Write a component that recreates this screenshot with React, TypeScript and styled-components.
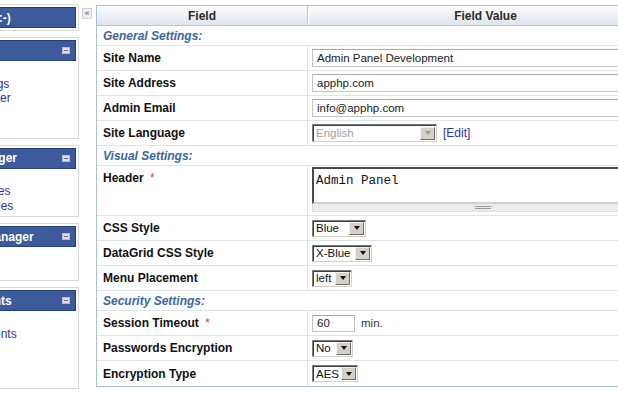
import styled, { createGlobalStyle } from "styled-components";

const menus = [
  { title: "General", items: ["Home", "Site Settings", "Site Scanner", "Backups", "Logout"] },
  { title: "Languages Manager", items: ["Add New", "Label Values", "All Messages"] },
  { title: "Subscriptions Manager", items: ["Plans", "Members"] },
  { title: "Users & Comments", items: ["Users", "All Comments", "Reviews", "Ratings", "Bans"] },
];

const App = () => {
  return (
    <>
      <GlobalStyle />
      <SPage>
        <SSidebar>
          <SPanel>
            <SBar>Welcome, admin :-)</SBar>
          </SPanel>
          {menus.map((menu) => (
            <SPanel key={menu.title}>
              <SBar>
                {menu.title}
                <SMinus />
              </SBar>
              <SMenuList>
                {menu.items.map((item) => (
                  <SMenuLink href="#" key={item}>
                    {item}
                  </SMenuLink>
                ))}
              </SMenuList>
            </SPanel>
          ))}
        </SSidebar>
        <SCollapse>«</SCollapse>
        <SMain>
          <STable>
            <SHeadRow>
              <SHeadCell>Field</SHeadCell>
              <SHeadCell>Field Value</SHeadCell>
            </SHeadRow>

            <SSection>General Settings:</SSection>
            <SRow>
              <SLabel>Site Name</SLabel>
              <SValue>
                <STextInput readOnly value="Admin Panel Development" />
              </SValue>
            </SRow>
            <SRow>
              <SLabel>Site Address</SLabel>
              <SValue>
                <STextInput readOnly value="apphp.com" />
              </SValue>
            </SRow>
            <SRow>
              <SLabel>Admin Email</SLabel>
              <SValue>
                <STextInput readOnly value="info@apphp.com" />
              </SValue>
            </SRow>
            <SRow>
              <SLabel>Site Language</SLabel>
              <SValue>
                <SSelect $w={125} $h={18} $disabled>
                  English
                  <SArrow $disabled />
                </SSelect>
                <SEditLink href="#">[Edit]</SEditLink>
              </SValue>
            </SRow>

            <SSection>Visual Settings:</SSection>
            <SRow $h={50}>
              <SLabel $top>
                Header <SReq>*</SReq>
              </SLabel>
              <SValue $top>
                <SAreaWrap>
                  <STextArea readOnly value="Admin Panel" />
                  <SGrip>
                    <SGripLines />
                  </SGrip>
                </SAreaWrap>
              </SValue>
            </SRow>
            <SRow>
              <SLabel>CSS Style</SLabel>
              <SValue>
                <SSelect $w={54}>
                  Blue
                  <SArrow />
                </SSelect>
              </SValue>
            </SRow>
            <SRow>
              <SLabel>DataGrid CSS Style</SLabel>
              <SValue>
                <SSelect $w={60}>
                  X-Blue
                  <SArrow />
                </SSelect>
              </SValue>
            </SRow>
            <SRow>
              <SLabel>Menu Placement</SLabel>
              <SValue>
                <SSelect $w={40}>
                  left
                  <SArrow />
                </SSelect>
              </SValue>
            </SRow>

            <SSection>Security Settings:</SSection>
            <SRow>
              <SLabel>
                Session Timeout <SReq>*</SReq>
              </SLabel>
              <SValue>
                <SSmallInput readOnly value="60" />
                <SUnit>min.</SUnit>
              </SValue>
            </SRow>
            <SRow>
              <SLabel>Passwords Encryption</SLabel>
              <SValue>
                <SSelect $w={41}>
                  No
                  <SArrow />
                </SSelect>
              </SValue>
            </SRow>
            <SRow>
              <SLabel>Encryption Type</SLabel>
              <SValue>
                <SSelect $w={46}>
                  AES
                  <SArrow />
                </SSelect>
              </SValue>
            </SRow>
          </STable>
        </SMain>
      </SPage>
    </>
  );
};

const GlobalStyle = createGlobalStyle`
  html, body {
    margin: 0;
    padding: 0;
    overflow: hidden;
    background: #fff;
  }
  body {
    font-family: "Liberation Sans", Arial, sans-serif;
    font-size: 12px;
    color: #222;
  }
  * {
    box-sizing: border-box;
  }
`;

const SPage = styled.div`
  display: flex;
  align-items: flex-start;
`;

const SSidebar = styled.div`
  flex-shrink: 0;
  width: 185px;
  margin-left: -106px;
  padding-top: 4px;
  display: flex;
  flex-direction: column;
  gap: 6px;
`;

const SPanel = styled.div`
  background: #fff;
  border: 1px solid #d9d9d9;
  padding: 2px;
`;

const SBar = styled.div`
  height: 21px;
  display: flex;
  align-items: center;
  justify-content: space-between;
  padding: 0 5px 0 3px;
  background: #3d5b9c;
  border: 1px solid #263f78;
  color: #fff;
  font-weight: bold;
  font-size: 12px;
  white-space: nowrap;
  overflow: hidden;
`;

const SMinus = styled.span`
  flex-shrink: 0;
  width: 8px;
  height: 7px;
  background: #dcdde6;
  border: 1px solid #b9bccb;
  display: flex;
  align-items: center;
  justify-content: center;
  &::after {
    content: "";
    width: 4px;
    height: 1px;
    background: #6a6f86;
  }
`;

const SMenuList = styled.div`
  padding: 1px 0 1px;
`;

const SMenuLink = styled.a`
  display: block;
  padding-left: 45px;
  line-height: 14.5px;
  font-size: 12px;
  color: #33339a;
  text-decoration: none;
  white-space: nowrap;
`;

const SCollapse = styled.div`
  flex-shrink: 0;
  width: 10px;
  height: 11px;
  margin: 8px 4px 0 3px;
  border: 1px solid #cfcfcf;
  background: #efefef;
  color: #555;
  font-size: 9px;
  line-height: 9px;
  text-align: center;
`;

const SMain = styled.div`
  flex-shrink: 0;
  padding-top: 5px;
`;

const STable = styled.div`
  width: 568px;
  border: 1px solid #a9bfd8;
  background: #fff;
`;

const SHeadRow = styled.div`
  display: grid;
  grid-template-columns: 211px 1fr;
  height: 20px;
  background: linear-gradient(#fbfcfd, #dfe5ec);
  border-bottom: 1px solid #b6c6d8;
`;

const SHeadCell = styled.div`
  display: flex;
  align-items: center;
  justify-content: center;
  font-weight: bold;
  color: #2a2a2a;
  &:first-child {
    border-right: 1px solid #b6c6d8;
    box-shadow: 1px 0 0 #fff;
  }
`;

const SSection = styled.div`
  height: 20px;
  display: flex;
  align-items: center;
  padding-left: 6px;
  border-bottom: 1px solid #dde4ec;
  color: #3a68a2;
  font-weight: bold;
  font-style: italic;
`;

const SRow = styled.div<{ $h?: number }>`
  display: grid;
  grid-template-columns: 211px 1fr;
  height: ${(p) => p.$h ?? 25}px;
  border-bottom: 1px solid #dde4ec;
  &:last-child {
    border-bottom: none;
  }
`;

const SLabel = styled.div<{ $top?: boolean }>`
  display: flex;
  align-items: ${(p) => (p.$top ? "flex-start" : "center")};
  padding: ${(p) => (p.$top ? "5px" : "0")} 0 0 6px;
  border-right: 1px solid #dde4ec;
  font-weight: bold;
  color: #111;
  white-space: pre;
`;

const SReq = styled.span`
  color: #e03a3a;
  font-weight: normal;
  margin-left: 3px;
`;

const SValue = styled.div<{ $top?: boolean }>`
  display: flex;
  align-items: ${(p) => (p.$top ? "flex-start" : "center")};
  padding: ${(p) => (p.$top ? "1px" : "0")} 0 0 4px;
  gap: 6px;
`;

const STextInput = styled.input`
  width: 340px;
  height: 18px;
  padding: 0 4px;
  border: 1px solid #c4c4c4;
  border-top-color: #a8a8a8;
  font-family: "Liberation Sans", Arial, sans-serif;
  font-size: 11.5px;
  color: #222;
  outline: none;
`;

const SSmallInput = styled(STextInput)`
  width: 43px;
  height: 17px;
`;

const SUnit = styled.span`
  font-size: 11.5px;
  color: #333;
`;

const SSelect = styled.div<{ $w: number; $h?: number; $disabled?: boolean }>`
  width: ${(p) => p.$w}px;
  height: ${(p) => p.$h ?? 17}px;
  display: inline-flex;
  align-items: center;
  justify-content: space-between;
  padding-left: 3px;
  background: #fff;
  border: 1px solid;
  border-color: #7a7a7a #d4d0c8 #d4d0c8 #7a7a7a;
  box-shadow: inset 1px 1px 0 #404040;
  font-size: 11.5px;
  color: ${(p) => (p.$disabled ? "#a3a3a3" : "#111")};
  white-space: nowrap;
`;

const SArrow = styled.span<{ $disabled?: boolean }>`
  flex-shrink: 0;
  width: 15px;
  height: 13px;
  margin-right: 1px;
  background: #d4d0c8;
  border: 1px solid;
  border-color: #f4f3ef #6e6e6e #6e6e6e #f4f3ef;
  display: flex;
  align-items: center;
  justify-content: center;
  &::after {
    content: "";
    border-left: 3.5px solid transparent;
    border-right: 3.5px solid transparent;
    border-top: 4px solid ${(p) => (p.$disabled ? "#9a9a9a" : "#111")};
  }
`;

const SEditLink = styled.a`
  font-size: 12px;
  color: #33339a;
  text-decoration: none;
`;

const SAreaWrap = styled.div`
  width: 341px;
  display: flex;
  flex-direction: column;
`;

const STextArea = styled.textarea`
  width: 100%;
  height: 37px;
  padding: 5px 2px 3px;
  resize: none;
  border: 2px solid;
  border-color: #4a4a4a #d4d0c8 #d4d0c8 #4a4a4a;
  font-family: "Liberation Mono", "Courier New", monospace;
  font-size: 12.5px;
  color: #111;
  outline: none;
`;

const SGrip = styled.div`
  height: 8px;
  background: #ececec;
  border: 1px solid #dedede;
  border-top: none;
  display: flex;
  align-items: center;
  justify-content: center;
`;

const SGripLines = styled.span`
  width: 16px;
  height: 3px;
  border-top: 1px solid #9a9a9a;
  border-bottom: 1px solid #9a9a9a;
`;

export default App;
